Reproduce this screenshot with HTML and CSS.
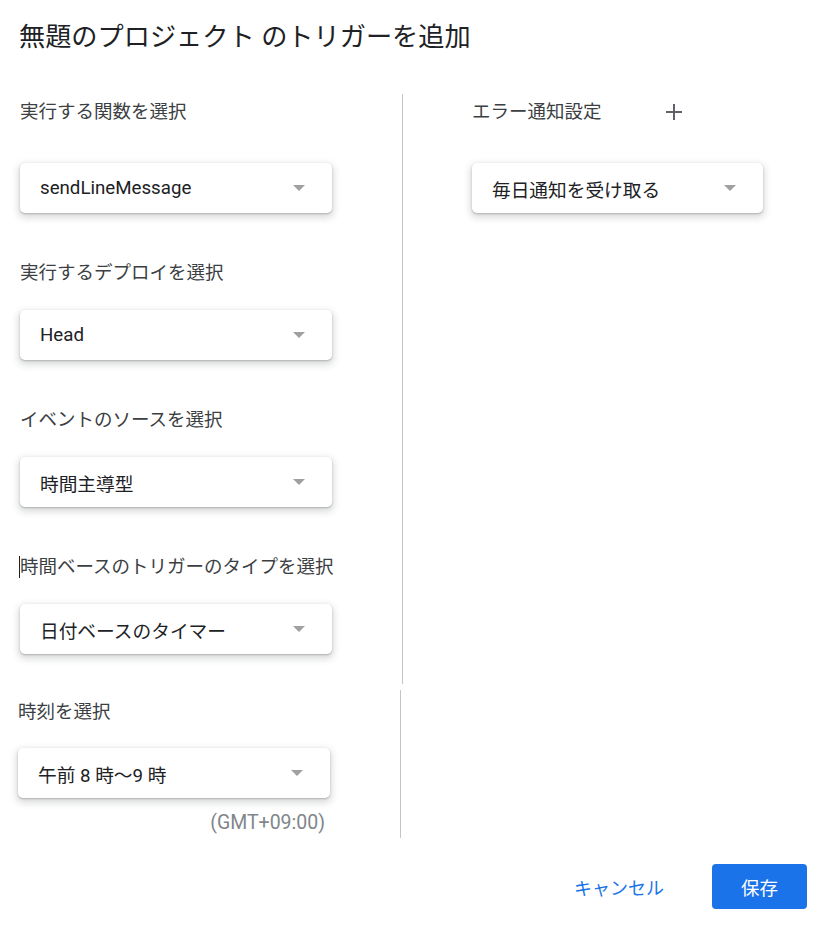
FILE: index.html
```html
<!DOCTYPE html>
<html lang="ja">
<head>
<meta charset="utf-8">
<title>トリガーを追加</title>
<link rel="stylesheet" href="styles.css">
</head>
<body>
<div class="dialog">
  <h1 class="title">無題のプロジェクト のトリガーを追加</h1>
  <div class="content">
    <div class="left">
      <div class="upper">
        <div class="section first">
          <div class="label">実行する関数を選択</div>
          <div class="select"><span class="value">sendLineMessage</span><span class="arrow"></span></div>
        </div>
        <div class="section">
          <div class="label">実行するデプロイを選択</div>
          <div class="select"><span class="value">Head</span><span class="arrow"></span></div>
        </div>
        <div class="section">
          <div class="label">イベントのソースを選択</div>
          <div class="select"><span class="value">時間主導型</span><span class="arrow"></span></div>
        </div>
        <div class="section">
          <div class="label"><span class="caret"></span>時間ベースのトリガーのタイプを選択</div>
          <div class="select"><span class="value">日付ベースのタイマー</span><span class="arrow"></span></div>
        </div>
      </div>
      <div class="lower">
        <div class="label">時刻を選択</div>
        <div class="select"><span class="value">午前 8 時～9 時</span><span class="arrow"></span></div>
        <div class="tz">(GMT+09:00)</div>
      </div>
    </div>
    <div class="right">
      <div class="right-head">
        <div class="label">エラー通知設定</div>
        <span class="plus" aria-label="追加">
          <svg width="18" height="18" viewBox="0 0 18 18"><path d="M9 1v16M1 9h16" stroke="#5f6368" stroke-width="2" fill="none"/></svg>
        </span>
      </div>
      <div class="select narrow"><span class="value">毎日通知を受け取る</span><span class="arrow"></span></div>
    </div>
  </div>
  <div class="footer">
    <button class="btn cancel">キャンセル</button>
    <button class="btn save">保存</button>
  </div>
</div>
</body>
</html>
```
FILE: styles.css
```css
* { box-sizing: border-box; }
html, body { margin: 0; padding: 0; background: #fff; }
body {
  font-family: Roboto, "Noto Sans CJK JP", sans-serif;
  color: #202124;
  width: 822px;
}
.title {
  margin: 0;
  padding: 20px 0 0 19px;
  height: 94px;
  font-size: 26.2px;
  font-weight: 400;
  line-height: 34px;
  color: #202124;
  white-space: nowrap;
}
.content {
  display: flex;
}
.left {
  width: 403px;
  flex: none;
}
.upper {
  width: 403px;
  border-right: 1px solid #c4c4c8;
  padding: 6px 0 30px 20px;
}
.section { margin-bottom: 48px; }
.section:last-child { margin-bottom: 0; }
.label {
  font-size: 18.5px;
  line-height: 24px;
  height: 24px;
  color: #3c4043;
  white-space: nowrap;
}
.section .label { margin-bottom: 25px; }
.section.first .label { margin-bottom: 39px; }
.caret {
  display: inline-block;
  width: 1px;
  height: 22px;
  background: #202124;
  vertical-align: -5px;
  margin-left: -1px;
}
.select {
  width: 312px;
  height: 50px;
  border-radius: 5px;
  background: #fff;
  box-shadow: 0 1px 2px rgba(60,64,67,.3), 0 3px 7px 2px rgba(60,64,67,.18);
  display: flex;
  align-items: center;
  justify-content: space-between;
  padding: 0 27px 0 20px;
}
.select.narrow { width: 291px; }
.value {
  font-size: 18.7px;
  color: #202124;
  white-space: nowrap;
}
.arrow {
  width: 0;
  height: 0;
  border-left: 6px solid transparent;
  border-right: 6px solid transparent;
  border-top: 6px solid #a0a0a0;
}
.lower {
  margin-top: 6px;
  width: 401px;
  border-right: 1px solid #c4c4c8;
  padding: 10px 0 5px 18px;
}
.lower .label { margin-bottom: 24px; }
.tz {
  width: 312px;
  text-align: right;
  padding-right: 5px;
  margin-top: 15px;
  font-size: 19.5px;
  line-height: 20px;
  color: #80868b;
}
.right {
  padding: 6px 0 0 69px;
}
.right-head {
  display: flex;
  align-items: center;
  height: 24px;
  margin-bottom: 39px;
}
.plus {
  display: flex;
  margin-left: 63px;
}
.footer {
  display: flex;
  justify-content: flex-end;
  align-items: center;
  margin-top: 26px;
  padding-right: 15px;
  gap: 32px;
}
.btn {
  font-family: Roboto, "Noto Sans CJK JP", sans-serif;
  font-size: 18.5px;
  height: 45px;
  border: none;
  border-radius: 4px;
  padding: 0 16px;
  background: none;
  cursor: pointer;
}
.cancel { color: #1a73e8; font-size: 18px; }
.save {
  width: 95px;
  background: #1a73e8;
  color: #fff;
}
```
